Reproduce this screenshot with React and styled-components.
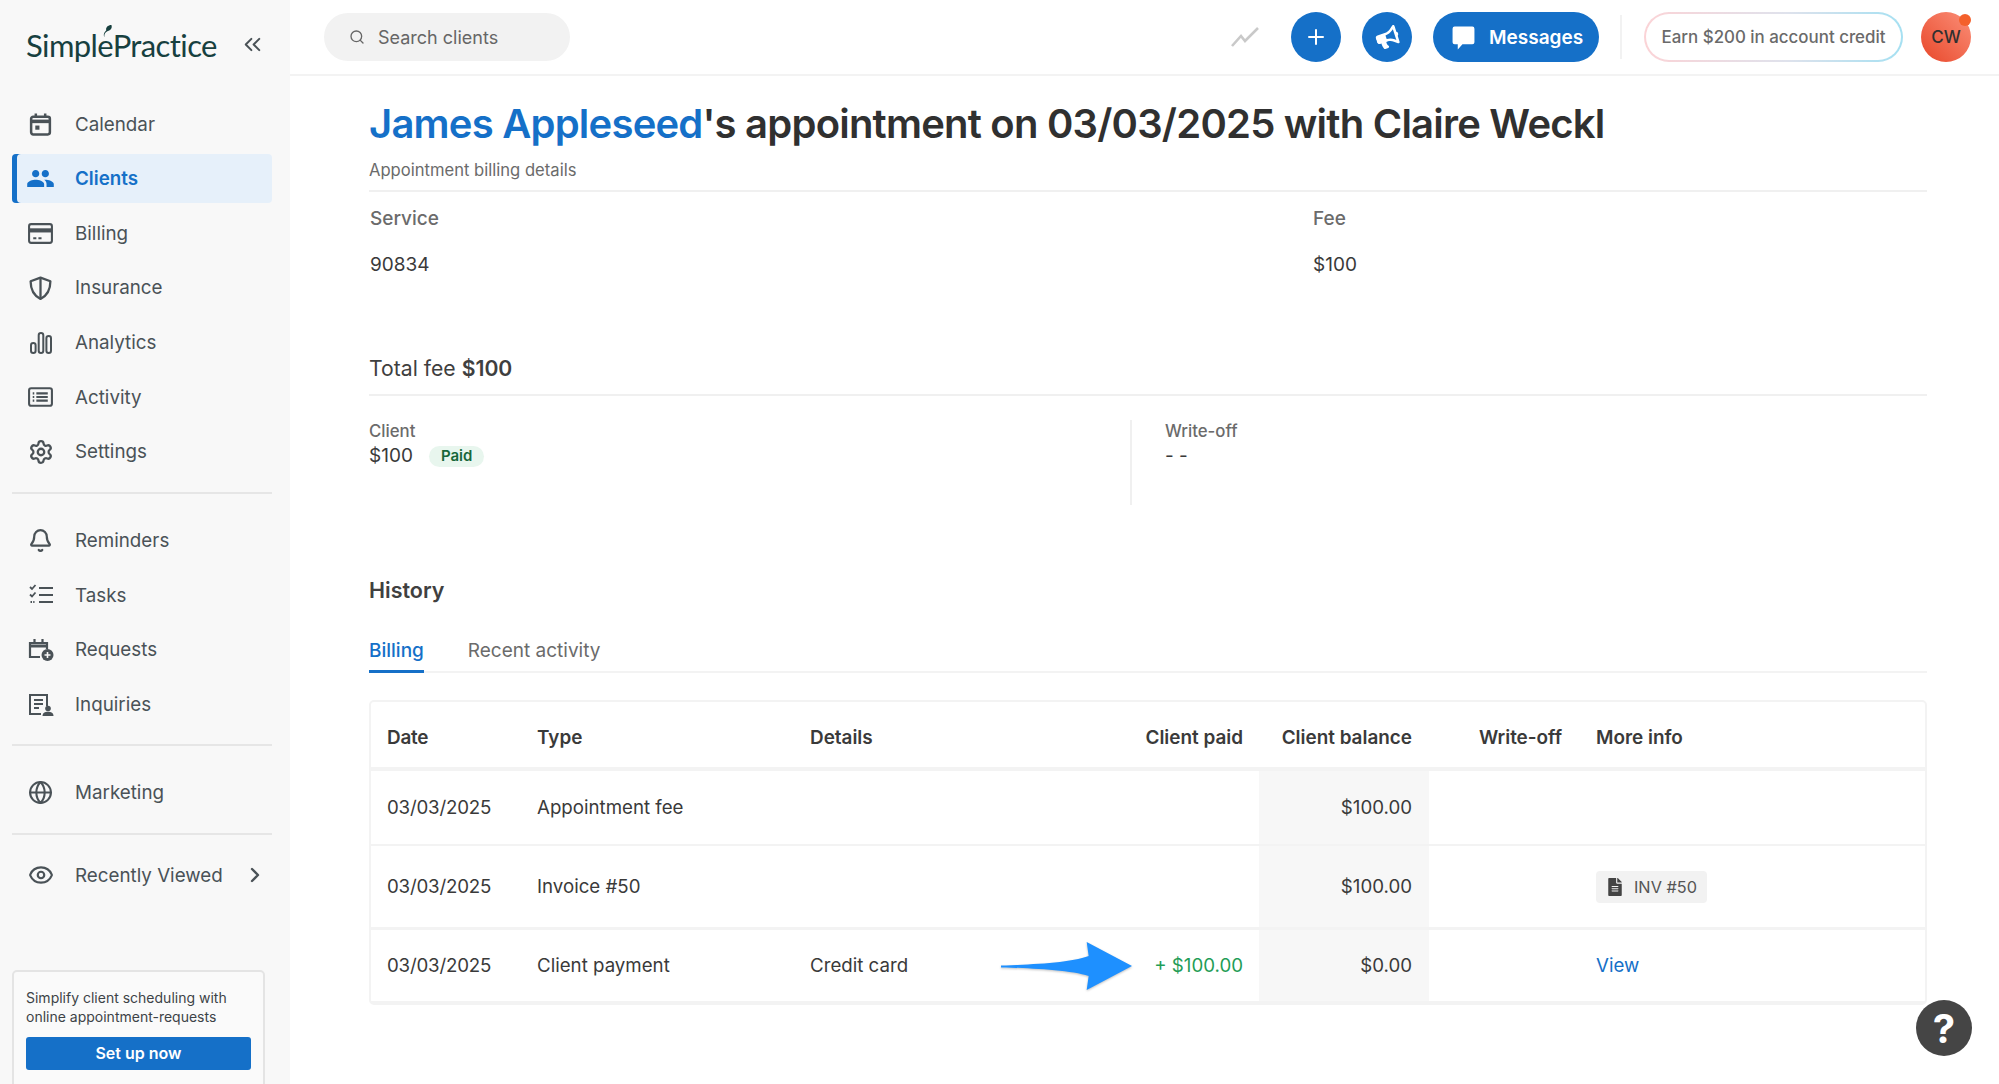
import React from "react";
import styled, { createGlobalStyle } from "styled-components";
import { Bell, ChevronRight, ChevronsLeft, Eye, Globe, Plus, Search, Settings } from "lucide-react";
import { FaBullhorn, FaFileAlt } from "react-icons/fa";
import { MdPeople } from "react-icons/md";

const Global = createGlobalStyle`
  html, body { margin: 0; padding: 0; height: 100%; background: #fff; overflow: hidden; }
  * { box-sizing: border-box; }
  body { font-family: Inter, "Liberation Sans", sans-serif; color: #303030; }
`;

const Layout = styled.div`
  display: grid;
  grid-template-columns: 290px 1fr;
  height: 1084px;
  overflow: hidden;
  position: relative;
`;

const Sidebar = styled.aside`
  background: #f8f8f8;
  height: 1084px;
  overflow: hidden;
  padding: 0 18px 0 12px;
`;

const LogoRow = styled.div`
  display: flex;
  align-items: center;
  justify-content: space-between;
  height: 99.5px;
  padding: 0 6px 10px 14px;
  color: #4a5257;
`;

const Logo = styled.div`
  position: relative;
  font-family: Lato, "Noto Sans", sans-serif;
  font-size: 31px;
  letter-spacing: -0.6px;
  color: #17403f;
`;

const Leaf = styled.svg`
  position: absolute;
  left: 76px;
  top: -2px;
  width: 12px;
  height: 14px;
`;

const NavGroup = styled.nav`
  display: flex;
  flex-direction: column;
  gap: 5.67px;
`;

const NavItem = styled.a`
  display: flex;
  align-items: center;
  height: 49px;
  padding-left: 14px;
  border-radius: 4px;
  font-size: 18.8px;
  gap: 20px;
  white-space: nowrap;
  color: ${p => (p.$active ? "#1570c8" : "#4a5257")};
  font-weight: ${p => (p.$active ? 600 : 400)};
  background: ${p => (p.$active ? "#e6f0fa" : "transparent")};
  box-shadow: ${p => (p.$active ? "inset 5px 0 0 #1570c8" : "none")};
`;

const IconBox = styled.span`
  width: 29px;
  height: 29px;
  display: flex;
  align-items: center;
  justify-content: center;
  flex-shrink: 0;
`;

const More = styled.span`
  margin-left: auto;
  display: flex;
  margin-right: 6px;
`;

const Rule = styled.hr`
  border: 0;
  height: 2px;
  background: #e6e6e6;
  margin: 15.5px 0 ${p => p.$after || 22}px;
`;

const Promo = styled.div`
  margin-top: 70px;
  width: 253px;
  height: 140px;
  background: #fafafa;
  border: 2px solid #e4e4e4;
  border-radius: 5px;
  padding: 16px 12px 0;
  font-size: 14px;
  line-height: 19px;
  color: #3d4347;
`;

const PromoButton = styled.div`
  margin-top: 11px;
  height: 33px;
  border-radius: 3px;
  background: #1570c8;
  color: #fff;
  font-size: 16px;
  font-weight: 600;
  display: flex;
  align-items: center;
  justify-content: center;
`;

const Column = styled.div`
  display: flex;
  flex-direction: column;
  min-width: 0;
`;

const TopBar = styled.header`
  height: 76px;
  border-bottom: 2px solid #f3f3f3;
  display: flex;
  align-items: center;
  padding: 0 28px 0 34px;
`;

const SearchBox = styled.div`
  width: 246px;
  height: 48px;
  background: #f2f2f2;
  border-radius: 24px;
  display: flex;
  align-items: center;
  gap: 13px;
  padding-left: 25px;
  color: #666;
  font-size: 18px;
`;

const TopActions = styled.div`
  margin-left: auto;
  display: flex;
  align-items: center;
`;

const Trend = styled.svg`
  width: 28px;
  height: 22px;
  margin-right: 32px;
`;

const RoundButton = styled.div`
  width: 50px;
  height: 50px;
  border-radius: 50%;
  background: #1570c8;
  color: #fff;
  display: flex;
  align-items: center;
  justify-content: center;
  margin-right: 21px;
`;

const MessagesButton = styled.div`
  width: 166px;
  height: 50px;
  border-radius: 25px;
  background: #1570c8;
  color: #fff;
  display: flex;
  align-items: center;
  gap: 13px;
  padding-left: 18px;
  font-size: 19px;
  font-weight: 600;
`;

const VLine = styled.div`
  width: 2px;
  height: 44px;
  background: #f2f2f2;
  margin: 0 22px 0 21px;
`;

const EarnPill = styled.div`
  width: 259px;
  height: 50px;
  border-radius: 25px;
  border: 2px solid transparent;
  background: linear-gradient(#fff, #fff) padding-box,
    linear-gradient(90deg, #fbd3d6, #dfe2ec 55%, #a5e0f2) border-box;
  display: flex;
  align-items: center;
  justify-content: center;
  font-size: 16.9px;
  font-weight: 500;
  color: #6a6a6a;
`;

const Avatar = styled.div`
  position: relative;
  width: 50px;
  height: 50px;
  margin-left: 18px;
  border-radius: 50%;
  background: linear-gradient(45deg, #e8472a, #fb8f78);
  display: flex;
  align-items: center;
  justify-content: center;
  font-size: 17px;
  font-weight: 500;
  color: #303030;
`;

const AvatarDot = styled.span`
  position: absolute;
  top: 2px;
  right: 0;
  width: 12px;
  height: 12px;
  border-radius: 50%;
  background: #f4602b;
`;

const Main = styled.main`
  padding: 21px 72px 0 79px;
`;

const Title = styled.h1`
  margin: 0;
  font-size: 40px;
  line-height: 54px;
  font-weight: 600;
  letter-spacing: -0.78px;
  color: #303030;
  white-space: nowrap;
`;

const NameLink = styled.span`
  color: #1570c8;
`;

const Subtitle = styled.div`
  margin-top: 9px;
  font-size: 16.6px;
  line-height: 20px;
  color: #6b6b6b;
`;

const Line = styled.div`
  height: 2px;
  background: #f0f0f0;
  margin-top: ${p => p.$top || 0}px;
`;

const ServiceGrid = styled.div`
  display: grid;
  grid-template-columns: 943px 1fr;
  margin-top: 15px;
  padding-left: 1px;
`;

const FieldLabel = styled.div`
  font-size: 19px;
  line-height: 24px;
  font-weight: 500;
  color: #6b6b6b;
`;

const FieldValue = styled.div`
  margin-top: 21.5px;
  font-size: 19px;
  line-height: 24px;
  color: #3a3a3a;
`;

const TotalFee = styled.div`
  margin-top: 77.5px;
  font-size: 21.2px;
  line-height: 28px;
  color: #3f3f3f;
  b { font-weight: 600; }
`;

const SplitRow = styled.div`
  display: flex;
  margin-top: 24px;
  height: 85px;
`;

const SplitCell = styled.div`
  width: ${p => p.$w}px;
  padding-left: ${p => p.$pad || 0}px;
  border-left: ${p => (p.$divider ? "2px solid #f0f0f0" : "none")};
`;

const SmallLabel = styled.div`
  margin-top: 1px;
  font-size: 16.8px;
  line-height: 20px;
  font-weight: 500;
  color: #6b6b6b;
`;

const AmountRow = styled.div`
  display: flex;
  align-items: center;
  gap: 16px;
  margin-top: 2px;
  font-size: 19px;
  line-height: 26px;
  color: #3a3a3a;
`;

const PaidBadge = styled.span`
  display: inline-flex;
  align-items: center;
  height: 21px;
  padding: 0 12px;
  border-radius: 11px;
  background: #e8f6ee;
  color: #17683a;
  font-size: 15px;
  font-weight: 600;
`;

const SectionTitle = styled.h2`
  margin: 71px 0 0;
  font-size: 21.5px;
  line-height: 28px;
  font-weight: 600;
  color: #404040;
`;

const Tabs = styled.div`
  display: flex;
  gap: 44px;
  margin-top: 32.5px;
  border-bottom: 2px solid #f3f3f3;
`;

const Tab = styled.div`
  height: 36.5px;
  font-size: 19px;
  line-height: 28px;
  color: ${p => (p.$active ? "#1570c8" : "#6b6b6b")};
  font-weight: ${p => (p.$active ? 500 : 400)};
  box-shadow: ${p => (p.$active ? "inset 0 -3px 0 #1570c8" : "none")};
  margin-bottom: -2px;
`;

const Table = styled.div`
  position: relative;
  margin-top: 27px;
  border: 2px solid #f3f3f3;
  border-radius: 5px;
  font-size: 18.7px;
`;

const Row = styled.div`
  display: grid;
  grid-template-columns: 149px 273px 1fr 200px 170px 150px 346px;
  height: ${p => p.$h}px;
  padding-top: ${p => (p.$head ? 5 : 0)}px;
  border-bottom: ${p => p.$line || 2}px solid #f3f3f3;
  font-size: ${p => (p.$head ? "18.9px" : "inherit")};
  font-weight: ${p => (p.$head ? 600 : 400)};
  color: #3a3a3a;
  &:last-child { border-bottom: 0; }
`;

const Cell = styled.div`
  display: flex;
  align-items: center;
  white-space: nowrap;
  padding: 0 ${p => p.$endPad || 17}px 0 17px;
  justify-content: ${p => (p.$right ? "flex-end" : "flex-start")};
  background: ${p => (p.$shade ? "#f7f7f7" : "transparent")};
  color: ${p => p.$color || "inherit"};
`;

const DateCell = styled(Cell)`
  padding-left: 16px;
  letter-spacing: -0.2px;
`;

const InvChip = styled.span`
  display: inline-flex;
  align-items: center;
  gap: 10px;
  height: 32px;
  padding: 0 10px;
  border-radius: 4px;
  background: #f2f2f2;
  color: #555;
  font-size: 16.3px;
`;

const Arrow = styled.svg`
  position: absolute;
  left: 629px;
  bottom: 13px;
  width: 132px;
  height: 48px;
  filter: drop-shadow(0 1px 1px rgba(0, 0, 0, 0.25));
`;

const HelpButton = styled.div`
  position: absolute;
  right: 27px;
  bottom: 28px;
  width: 56px;
  height: 56px;
  border-radius: 50%;
  background: #454545;
  color: #fff;
  font-size: 40px;
  font-weight: 700;
  display: flex;
  align-items: center;
  justify-content: center;
`;

const CalendarIcon = () => (
  <svg width="25" height="25" viewBox="0 0 24 24" fill="none" stroke="currentColor" strokeWidth="2.4">
    <rect x="3" y="4.5" width="18" height="17" rx="2" />
    <path d="M3 9h18" strokeWidth="3.4" />
    <path d="M7.5 1.5v4M16.5 1.5v4" />
    <rect x="7" y="13" width="4" height="4" fill="currentColor" stroke="none" />
  </svg>
);

const CardIcon = () => (
  <svg width="27" height="23" viewBox="0 0 26 22" fill="none" stroke="currentColor" strokeWidth="2">
    <rect x="2" y="2" width="22" height="18" rx="2" />
    <path d="M2 8h22" strokeWidth="4" />
    <path d="M6 15.5h3M11 15.5h3" />
  </svg>
);

const ShieldIcon = () => (
  <svg width="25" height="26" viewBox="0 0 24 24" fill="none" stroke="currentColor" strokeWidth="2.2" strokeLinejoin="round">
    <path d="M12 2 L21.5 5.5 C21.5 13 19 19 12 22.5 C5 19 2.5 13 2.5 5.5 Z" />
    <path d="M12 2v20.5" />
  </svg>
);

const BarsIcon = () => (
  <svg width="24" height="24" viewBox="0 0 24 24" fill="none" stroke="currentColor" strokeWidth="2">
    <rect x="2" y="12" width="4.6" height="10" rx="2.3" />
    <rect x="9.7" y="2" width="4.6" height="20" rx="2.3" />
    <rect x="17.4" y="5" width="4.6" height="17" rx="2.3" />
  </svg>
);

const ListBoxIcon = () => (
  <svg width="27" height="22" viewBox="0 0 26 21" fill="none" stroke="currentColor" strokeWidth="2">
    <rect x="2" y="2" width="22" height="17" rx="2" />
    <path d="M9 7h11M9 10.5h11M9 14h11" />
    <path d="M5.5 7h1.5M5.5 10.5h1.5M5.5 14h1.5" />
  </svg>
);

const TasksIcon = () => (
  <svg width="26" height="24" viewBox="0 0 26 24" fill="none" stroke="currentColor" strokeWidth="2">
    <path d="M11 5h14M11 12h14M11 19h14" />
    <path d="M2 4l2 2 3.5-4M2 11.5l2 2 3.5-4" strokeWidth="1.8" />
    <path d="M2.5 19h4" strokeWidth="1.8" strokeDasharray="1.5 1.2" />
  </svg>
);

const RequestsIcon = () => (
  <svg width="27" height="25" viewBox="0 0 27 25" fill="none" stroke="currentColor" strokeWidth="2.2">
    <path d="M13 20H3V6h17v6" />
    <path d="M3 9h17" strokeWidth="3" />
    <path d="M7.5 2v4M15.5 2v4" />
    <circle cx="20.5" cy="18" r="6" fill="currentColor" stroke="none" />
    <path d="M20.5 15v6M17.5 18h6" stroke="#f8f8f8" strokeWidth="1.6" />
  </svg>
);

const InquiriesIcon = () => (
  <svg width="27" height="25" viewBox="0 0 27 25" fill="none" stroke="currentColor" strokeWidth="2">
    <path d="M14 22H3V3h17v11" />
    <path d="M7 8h9M7 12h9M7 16h5" />
    <circle cx="21" cy="16.5" r="2.8" fill="currentColor" stroke="none" />
    <path d="M15.5 24c0-3 2.4-4.2 5.5-4.2s5.5 1.2 5.5 4.2z" fill="currentColor" stroke="none" />
  </svg>
);

const BubbleIcon = () => (
  <svg width="25" height="25" viewBox="0 0 24 24" fill="currentColor">
    <path d="M3.5 1.5h17a2 2 0 0 1 2 2v13a2 2 0 0 1-2 2H11l-4.5 5v-5h-3a2 2 0 0 1-2-2v-13a2 2 0 0 1 2-2z" />
  </svg>
);

const nav1 = [
  ["Calendar", <CalendarIcon />],
  ["Clients", <MdPeople size={29} />, true],
  ["Billing", <CardIcon />],
  ["Insurance", <ShieldIcon />],
  ["Analytics", <BarsIcon />],
  ["Activity", <ListBoxIcon />],
  ["Settings", <Settings size={26} strokeWidth={2.1} />],
];

const nav2 = [
  ["Reminders", <Bell size={25} strokeWidth={2.1} />],
  ["Tasks", <TasksIcon />],
  ["Requests", <RequestsIcon />],
  ["Inquiries", <InquiriesIcon />],
];

const renderNav = items =>
  items.map(([label, icon, active]) => (
    <NavItem key={label} $active={active}>
      <IconBox>{icon}</IconBox>
      {label}
    </NavItem>
  ));

const rows = [
  { date: "03/03/2025", type: "Appointment fee", balance: "$100.00", h: 75 },
  { date: "03/03/2025", type: "Invoice #50", balance: "$100.00", h: 84, line: 3, chip: true },
  { date: "03/03/2025", type: "Client payment", details: "Credit card", paid: "+ $100.00", balance: "$0.00", h: 73, view: true },
];

export default function App() {
  return (
    <>
      <Global />
      <Layout>
        <Sidebar>
          <LogoRow>
            <Logo>
              SimplePractice
              <Leaf viewBox="0 0 14 16">
                <path d="M3 15C2 11 5 9 7 8 11 6.500 12 4 11 1 7 1 4 4 5 7 3 9 1 12 3 15z" fill="#17403f" />
              </Leaf>
            </Logo>
            <ChevronsLeft size={27} strokeWidth={1.8} />
          </LogoRow>
          <NavGroup>{renderNav(nav1)}</NavGroup>
          <Rule />
          <NavGroup>{renderNav(nav2)}</NavGroup>
          <Rule />
          <NavGroup>
            <NavItem>
              <IconBox><Globe size={25} strokeWidth={2} /></IconBox>
              Marketing
            </NavItem>
          </NavGroup>
          <Rule $after={16} />
          <NavGroup>
            <NavItem>
              <IconBox><Eye size={26} strokeWidth={2} /></IconBox>
              Recently Viewed
              <More><ChevronRight size={24} strokeWidth={2.4} /></More>
            </NavItem>
          </NavGroup>
          <Promo>
            Simplify client scheduling with online appointment-requests
            <PromoButton>Set up now</PromoButton>
          </Promo>
        </Sidebar>
        <Column>
          <TopBar>
            <SearchBox>
              <Search size={16} strokeWidth={2} />
              Search clients
            </SearchBox>
            <TopActions>
              <Trend viewBox="0 0 28 22" fill="none" stroke="#c9c9c9" strokeWidth="2.6">
                <path d="M1 20 L10 10 L14 15 L27 2" />
              </Trend>
              <RoundButton><Plus size={24} strokeWidth={2} /></RoundButton>
              <RoundButton><FaBullhorn size={23} style={{ transform: "rotate(-18deg)" }} /></RoundButton>
              <MessagesButton>
                <BubbleIcon />
                Messages
              </MessagesButton>
              <VLine />
              <EarnPill>Earn $200 in account credit</EarnPill>
              <Avatar>
                CW
                <AvatarDot />
              </Avatar>
            </TopActions>
          </TopBar>
          <Main>
            <Title>
              <NameLink>James Appleseed</NameLink>'s appointment on 03/03/2025 with Claire Weckl
            </Title>
            <Subtitle>Appointment billing details</Subtitle>
            <Line $top={10} />
            <ServiceGrid>
              <div>
                <FieldLabel>Service</FieldLabel>
                <FieldValue>90834</FieldValue>
              </div>
              <div>
                <FieldLabel>Fee</FieldLabel>
                <FieldValue>$100</FieldValue>
              </div>
            </ServiceGrid>
            <TotalFee>Total fee <b>$100</b></TotalFee>
            <Line $top={12} />
            <SplitRow>
              <SplitCell $w={761}>
                <SmallLabel>Client</SmallLabel>
                <AmountRow>$100 <PaidBadge>Paid</PaidBadge></AmountRow>
              </SplitCell>
              <SplitCell $w={700} $pad={33} $divider>
                <SmallLabel>Write-off</SmallLabel>
                <AmountRow>- -</AmountRow>
              </SplitCell>
            </SplitRow>
            <SectionTitle>History</SectionTitle>
            <Tabs>
              <Tab $active>Billing</Tab>
              <Tab>Recent activity</Tab>
            </Tabs>
            <Table>
              <Row $head $h={69} $line={4}>
                <DateCell>Date</DateCell>
                <Cell>Type</Cell>
                <Cell>Details</Cell>
                <Cell $right $endPad={16}>Client paid</Cell>
                <Cell $right>Client balance</Cell>
                <Cell $right>Write-off</Cell>
                <Cell>More info</Cell>
              </Row>
              {rows.map(r => (
                <Row key={r.type} $h={r.h} $line={r.line}>
                  <DateCell>{r.date}</DateCell>
                  <Cell>{r.type}</Cell>
                  <Cell>{r.details}</Cell>
                  <Cell $right $endPad={16} $color="#1f9d57">{r.paid}</Cell>
                  <Cell $right $shade>{r.balance}</Cell>
                  <Cell />
                  <Cell $color="#1570c8">
                    {r.chip && <InvChip><FaFileAlt size={18} color="#444" />INV #50</InvChip>}
                    {r.view && "View"}
                  </Cell>
                </Row>
              ))}
              <Arrow viewBox="0 0 134 48" preserveAspectRatio="none">
                <path d="M1 23.500C30 22.500 72 21 90 14L88 0 134 24 88 48 90 34C72 28 30 26 1 25.500z" fill="#1e90ff" />
              </Arrow>
            </Table>
          </Main>
        </Column>
        <HelpButton>?</HelpButton>
      </Layout>
    </>
  );
}
